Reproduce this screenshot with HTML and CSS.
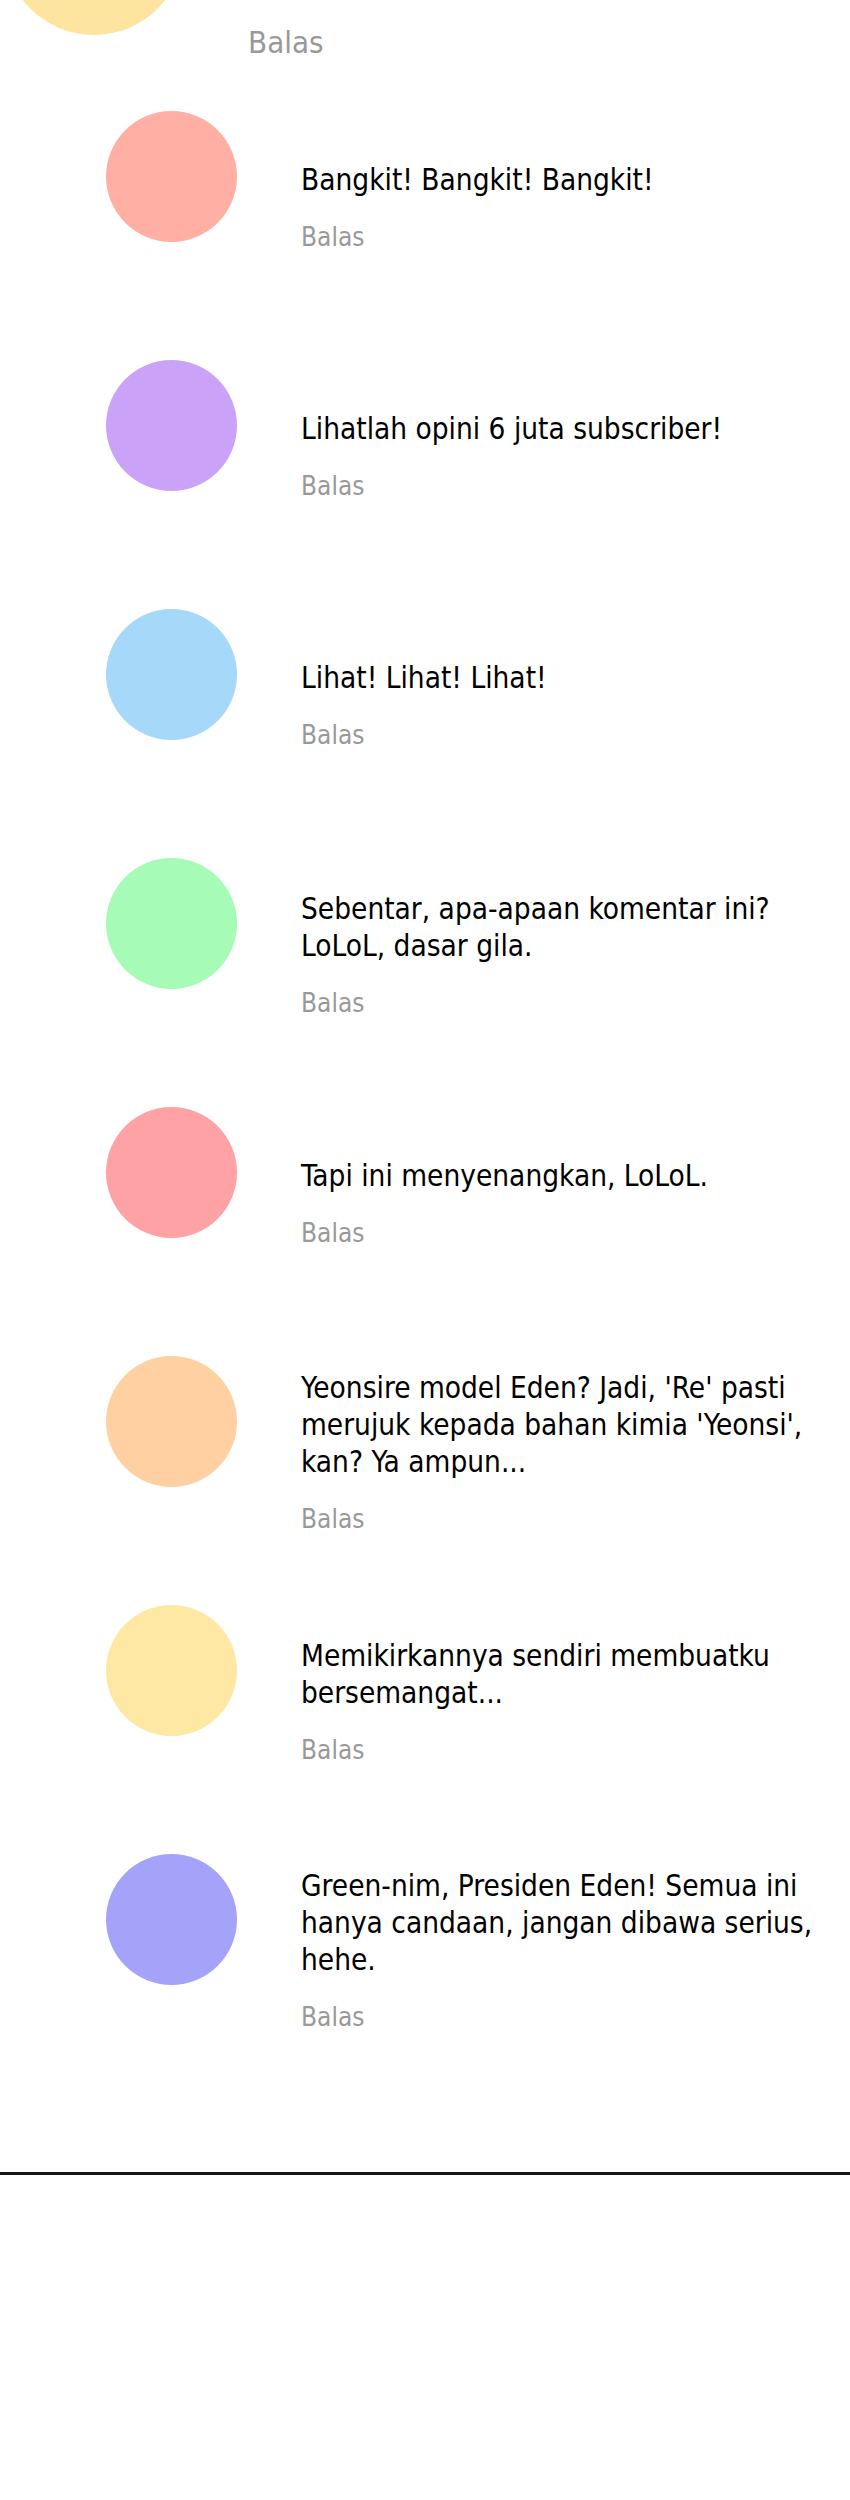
FILE: index.html
```html
<!DOCTYPE html>
<html lang="id">
<head>
<meta charset="utf-8">
<title>Balasan</title>
<link rel="stylesheet" href="styles.css">
</head>
<body>
<main class="thread">
  <section class="comment-parent">
    <div class="avatar avatar--lg avatar--sand"></div>
    <a class="reply-link reply-link--lg" href="#">Balas</a>
  </section>

  <ul class="replies">
    <li class="reply">
      <div class="avatar avatar--salmon"></div>
      <div class="reply__body">
        <p class="reply__text">Bangkit! Bangkit! Bangkit!</p>
        <a class="reply-link" href="#">Balas</a>
      </div>
    </li>
    <li class="reply">
      <div class="avatar avatar--lilac"></div>
      <div class="reply__body">
        <p class="reply__text">Lihatlah opini 6 juta subscriber!</p>
        <a class="reply-link" href="#">Balas</a>
      </div>
    </li>
    <li class="reply">
      <div class="avatar avatar--sky"></div>
      <div class="reply__body">
        <p class="reply__text">Lihat! Lihat! Lihat!</p>
        <a class="reply-link" href="#">Balas</a>
      </div>
    </li>
    <li class="reply">
      <div class="avatar avatar--mint"></div>
      <div class="reply__body">
        <p class="reply__text">Sebentar, apa-apaan komentar ini?<br>LoLoL, dasar gila.</p>
        <a class="reply-link" href="#">Balas</a>
      </div>
    </li>
    <li class="reply">
      <div class="avatar avatar--rose"></div>
      <div class="reply__body">
        <p class="reply__text">Tapi ini menyenangkan, LoLoL.</p>
        <a class="reply-link" href="#">Balas</a>
      </div>
    </li>
    <li class="reply">
      <div class="avatar avatar--peach"></div>
      <div class="reply__body">
        <p class="reply__text">Yeonsire model Eden? Jadi, 'Re' pasti<br>merujuk kepada bahan kimia 'Yeonsi',<br>kan? Ya ampun...</p>
        <a class="reply-link" href="#">Balas</a>
      </div>
    </li>
    <li class="reply">
      <div class="avatar avatar--butter"></div>
      <div class="reply__body">
        <p class="reply__text">Memikirkannya sendiri membuatku<br>bersemangat...</p>
        <a class="reply-link" href="#">Balas</a>
      </div>
    </li>
    <li class="reply">
      <div class="avatar avatar--periwinkle"></div>
      <div class="reply__body">
        <p class="reply__text">Green-nim, Presiden Eden! Semua ini<br>hanya candaan, jangan dibawa serius,<br>hehe.</p>
        <a class="reply-link" href="#">Balas</a>
      </div>
    </li>
  </ul>

  <hr class="divider">
</main>
</body>
</html>
```

FILE: styles.css
```css
* {
  box-sizing: border-box;
}

html,
body {
  margin: 0;
  background: #ffffff;
}

body {
  font-family: "DejaVu Sans Condensed", "DejaVu Sans", sans-serif;
  font-stretch: condensed;
  color: #000000;
}

.thread {
  min-height: 2500px;
  overflow: hidden;
}

/* parent comment, scrolled mostly out of view */
.comment-parent {
  display: flex;
  height: 52px;
}

.avatar {
  flex-shrink: 0;
  width: 131px;
  height: 131px;
  border-radius: 50%;
}

.avatar--lg {
  width: 180px;
  height: 180px;
  margin: -145px 0 0 4px;
}

.avatar--sand { background: #fde49f; }
.avatar--salmon { background: #ffafa3; }
.avatar--lilac { background: #caa3f9; }
.avatar--sky { background: #a6d8f9; }
.avatar--mint { background: #a6fbb6; }
.avatar--rose { background: #ffa2a6; }
.avatar--peach { background: #ffd0a2; }
.avatar--butter { background: #ffe8a3; }
.avatar--periwinkle { background: #a5a3f9; }

.reply-link {
  display: block;
  margin-top: 23px;
  font-size: 26px;
  line-height: 30px;
  color: #999999;
  text-decoration: none;
}

.reply-link--lg {
  margin: 24px 0 0 64px;
  font-size: 31px;
  line-height: 36px;
}

/* replies */
.replies {
  list-style: none;
  margin: 0;
  padding: 0 0 0 106px;
}

.reply {
  display: flex;
  align-items: center;
  gap: 64px;
  height: 249px;
}

/* top padding mirrors the "Balas" row (plus a little) so the text sits level with the avatar */
.reply__body {
  padding-top: 61px;
}

.reply__text {
  margin: 0;
  font-size: 29.5px;
  line-height: 37px;
  white-space: nowrap;
}

.divider {
  margin: 128px 0 0;
  border: 0;
  height: 3px;
  background: #151515;
}
```
